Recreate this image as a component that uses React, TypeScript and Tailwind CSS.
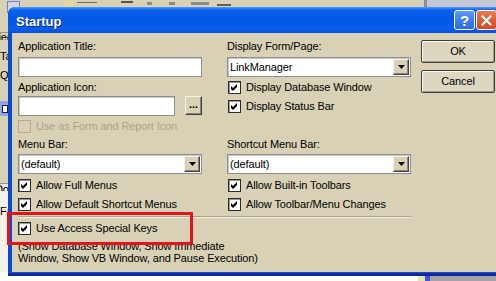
import React from "react";

const BEIGE = "bg-[#d8d1b5]";

function Check({ checked = true, disabled = false }: { checked?: boolean; disabled?: boolean }) {
  return (
    <span
      className={
        "w-[13px] h-[13px] shrink-0 flex items-center justify-center border " +
        (disabled ? "border-[#b4ad96] bg-[#d8d1b5]" : "border-[#2b2b2b] bg-white shadow-[inset_1px_1px_0_#9a9a9a]")
      }
    >
      {checked && (
        <svg width="7" height="7" viewBox="0 0 7 7">
          <polygon points="0,2 2,4 6,0 6,3 2,7 0,5" fill="#000" />
        </svg>
      )}
    </span>
  );
}

function CheckRow({ label, disabled = false, checked = true, className = "" }: { label: string; disabled?: boolean; checked?: boolean; className?: string }) {
  return (
    <div className={"flex items-center h-[13px] gap-[5px] " + className}>
      <Check checked={checked} disabled={disabled} />
      <span className={"leading-[13px] whitespace-nowrap " + (disabled ? "text-[#aaa38c]" : "text-black")}>{label}</span>
    </div>
  );
}

function Label({ text, className = "" }: { text: string; className?: string }) {
  return <div className={"h-[13px] leading-[13px] whitespace-nowrap " + className}>{text}</div>;
}

function TextBox({ className = "" }: { className?: string }) {
  return <div className={"h-[20px] bg-white border border-[#8e8e8e] shadow-[inset_1px_1px_0_#c9c9c9] " + className} />;
}

function Select({ value, className = "" }: { value: string; className?: string }) {
  return (
    <div className={"h-[20px] w-[184px] bg-white border border-[#8e8e8e] shadow-[inset_1px_1px_0_#c9c9c9] flex items-center pl-[2px] pr-[1px] " + className}>
      <span className="flex-1 leading-[13px] whitespace-nowrap">{value}</span>
      <span className={"w-[16px] h-[16px] flex items-center justify-center border border-t-[#f4f1e6] border-l-[#f4f1e6] border-b-[#404040] border-r-[#404040] shadow-[inset_-1px_-1px_0_#8c8773] " + BEIGE}>
        <svg width="7" height="4" viewBox="0 0 7 4">
          <polygon points="0,0 7,0 3.5,4" fill="#000" />
        </svg>
      </span>
    </div>
  );
}

function Button({ label, className = "" }: { label: string; className?: string }) {
  return (
    <div
      className={
        "w-[74px] h-[23px] flex items-center justify-center rounded-[2px] border border-[#3e3e3e] bg-[#ddd7c0] shadow-[inset_1px_1px_0_#faf8f0,inset_-1px_-1px_0_#a39e88] " +
        className
      }
    >
      {label}
    </div>
  );
}

export default function App() {
  return (
    <div className="relative w-[496px] h-[281px] overflow-hidden bg-[#d8d1b5] font-['Liberation_Sans',Arial,sans-serif] text-[11px] tracking-[-0.12px] text-black">
      {/* Background Access window */}
      <div className="flex flex-col h-full">
        <div className="h-[7px] flex items-start relative">
          <div className="ml-[7px] mt-[1px] w-[13px] h-[12px] border border-[#6f86b8] bg-[#d3d6e4]" />
          <div className="ml-[45px] mt-[1px] w-[8px] h-[5px] bg-[#e8d890]" />
          <div className="ml-[4px] mt-[2px] w-[20px] h-[3px] border-t border-[#6a6a6a]" />
          <div className="ml-[24px] mt-[1px] w-[12px] h-[5px] border-t-2 border-[#555]" />
          <div className="ml-[14px] mt-[2px] w-[5px] h-[3px] bg-[#8a8a8a]" />
          <div className="ml-[17px] mt-[2px] w-[6px] h-[3px] bg-[#8a8a8a]" />
          <div className="ml-[16px] mt-[2px] w-[18px] h-[3px] bg-[#8a8a8a]" />
          <div className="ml-[8px] mt-[4px] w-[14px] h-[2px] bg-[#5f5f5f]" />
          <div className="ml-auto w-[3px] h-[7px] bg-[#8d8d96]" />
          <div className="w-[69px] h-[7px] bg-[#c6c8d8]" />
        </div>
        <div className="flex-1 flex flex-col w-[12px] overflow-hidden text-[11px]">
          <div className="h-[25px]" />
          <div className="h-[8px] border-t border-[#9c9680] overflow-hidden whitespace-nowrap leading-[8px] -ml-[16px]">Objects</div>
          <div className="mt-[10px] h-[13px] leading-[13px] whitespace-nowrap">Tables</div>
          <div className="mt-[6px] h-[13px] leading-[13px] whitespace-nowrap">Queries</div>
          <div className="mt-[19px] h-[15px] bg-[#8ea6e2] flex items-center pl-[2px]">
            <div className="w-[6px] h-[8px] border border-[#222] bg-white" />
          </div>
          <div className="flex-1" />
          <div className="h-[8px] border-t border-[#9c9680] bg-[#eeebe0] whitespace-nowrap leading-[10px] -ml-[5px]">Docs</div>
          <div className="flex-1 bg-[#f3f1e8] pt-[14px] leading-[13px] whitespace-nowrap">Favorites</div>
        </div>
        <div className="h-[9px] flex shrink-0">
          <div className="w-[418px] bg-white" />
          <div className="w-[7px] bg-[#e9e2b8]" />
          <div className="w-[5px] bg-[#3b5ad0]" />
          <div className="flex-1 bg-[#a3a3a8]" />
        </div>
      </div>

      {/* Startup dialog */}
      <div className="absolute left-[8px] top-[7px] w-[510px] rounded-t-[7px] overflow-hidden bg-[#0a48d8] flex flex-col">
        <div className="h-[26px] flex items-center bg-[linear-gradient(to_bottom,#4f9bff_0px,#0c62ec_3px,#0056e6_12px,#0a5cec_22px,#0a4fd8_26px)]">
          <span className="ml-[8px] text-white font-bold text-[13px] leading-[13px] mt-[2px] tracking-normal [text-shadow:1px_1px_0_#0a2a8a]">Startup</span>
          <div className="ml-auto flex items-center gap-[1px] mr-[21px]">
            <div className="w-[21px] h-[20px] rounded-[3px] border border-white bg-[linear-gradient(to_bottom,#5d97ff,#2b69e8)] flex items-center justify-center text-white font-bold text-[15px] leading-[15px]">?</div>
            <div className="w-[21px] h-[20px] rounded-[3px] border border-white bg-[linear-gradient(to_bottom,#ec7a52,#d6461e)] flex items-center justify-center">
              <svg width="11" height="11" viewBox="0 0 11 11">
                <path d="M1.5 1.5 L9.5 9.5 M9.5 1.5 L1.5 9.5" stroke="#fff" strokeWidth="2.2" strokeLinecap="square" />
              </svg>
            </div>
          </div>
        </div>
        <div className={"ml-[4px] h-[239px] pl-[6px] pt-[7px] flex " + BEIGE}>
          <div className="w-[393px] flex flex-col">
            <div className="flex gap-[25px] items-start">
              <div className="w-[184px] flex flex-col">
                <Label text="Application Title:" />
                <TextBox className="mt-[4px] w-[184px]" />
                <Label text="Application Icon:" className="mt-[4px]" />
                <div className="mt-[2px] flex items-start gap-[10px]">
                  <TextBox className="w-[157px]" />
                  <div className="w-[17px] h-[19px] flex items-center justify-center border border-t-[#f4f1e6] border-l-[#f4f1e6] border-b-[#404040] border-r-[#404040] shadow-[inset_-1px_-1px_0_#8c8773] font-bold leading-[8px] pb-[3px]">...</div>
                </div>
                <CheckRow label="Use as Form and Report Icon" disabled checked={false} className="mt-[4px]" />
              </div>
              <div className="w-[184px] flex flex-col">
                <Label text="Display Form/Page:" />
                <Select value="LinkManager" className="mt-[4px]" />
                <CheckRow label="Display Database Window" className="mt-[4px] ml-px" />
                <CheckRow label="Display Status Bar" className="mt-[6px] ml-px" />
              </div>
            </div>
            <div className="mt-[5px] grid grid-cols-[184px_184px] gap-x-[25px]">
              <Label text="Menu Bar:" />
              <Label text="Shortcut Menu Bar:" />
              <Select value="(default)" className="mt-[3px]" />
              <Select value="(default)" className="mt-[3px]" />
              <CheckRow label="Allow Full Menus" className="mt-[5px]" />
              <CheckRow label="Allow Built-in Toolbars" className="mt-[5px] ml-px" />
              <CheckRow label="Allow Default Shortcut Menus" className="mt-[6px]" />
              <CheckRow label="Allow Toolbar/Menu Changes" className="mt-[6px] ml-px" />
            </div>
            <div className="mt-[5px] h-[2px] border-t border-[#a8a28a] border-b border-b-[#f3f0e4]" />
            <CheckRow label="Use Access Special Keys" className="mt-[4px]" />
            <div className="mt-[5px] leading-[12px] whitespace-nowrap">
              (Show Database Window, Show Immediate
              <br />
              Window, Show VB Window, and Pause Execution)
            </div>
          </div>
          <div className="ml-[10px] flex flex-col">
            <Button label="OK" />
            <Button label="Cancel" className="mt-[7px]" />
          </div>
        </div>
        <div className="h-[4px] bg-[linear-gradient(to_bottom,#3c64e0_0px,#0b2fb0_1px,#0a2690_4px)]" />
      </div>

      {/* Red annotation box */}
      <div className="absolute left-[7px] top-[212px] w-[186px] h-[33px] border-[3px] border-[#e5131b]" />
    </div>
  );
}
